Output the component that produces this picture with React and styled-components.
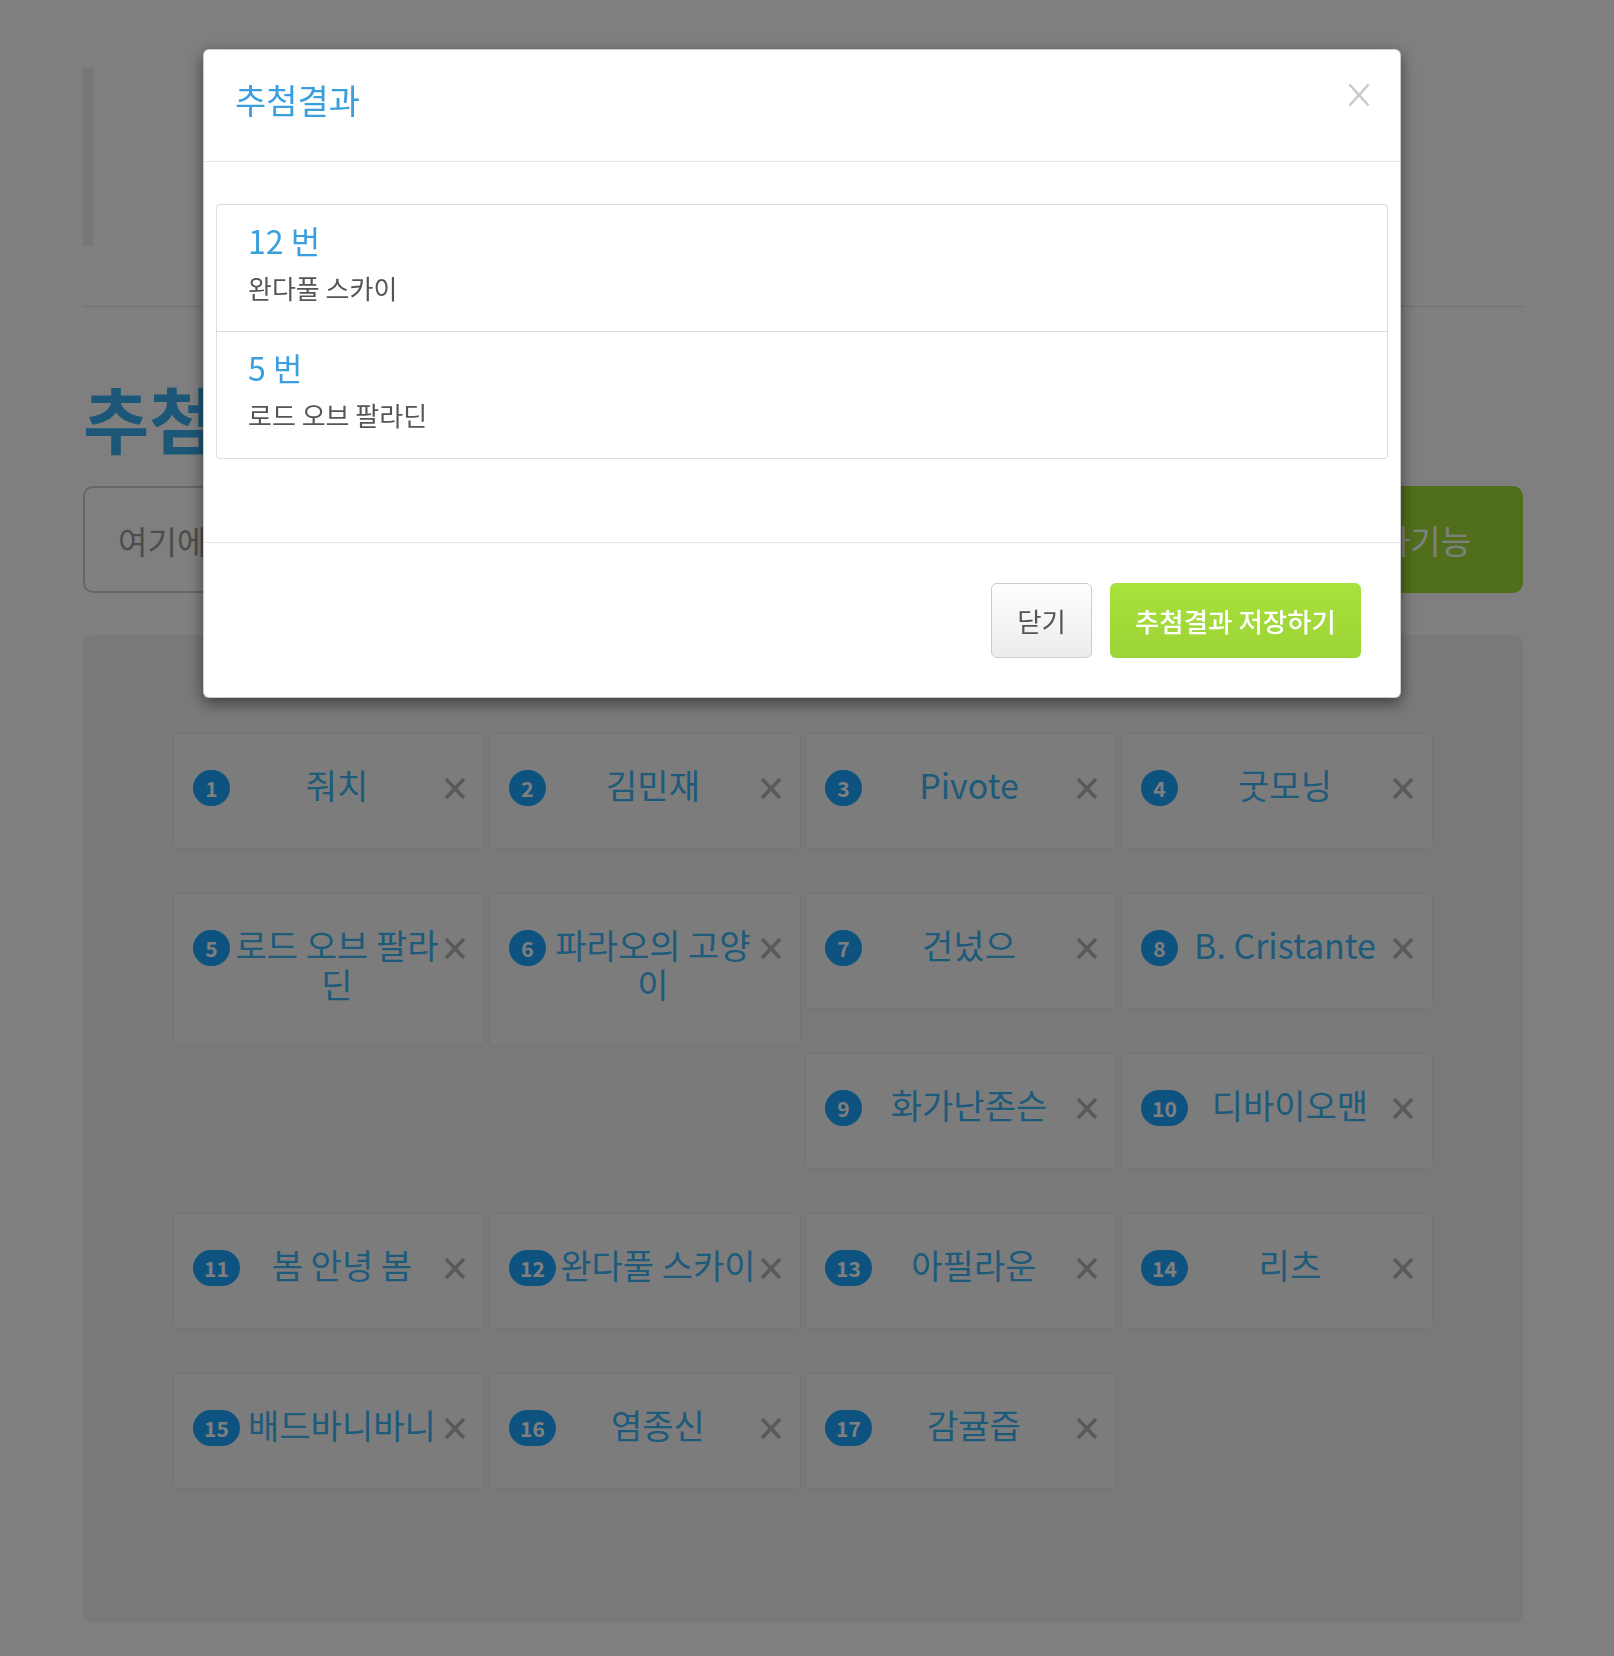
import React from "react";
import styled, { createGlobalStyle } from "styled-components";

const GlobalStyle = createGlobalStyle`
  html, body { margin: 0; padding: 0; background: #fff; }
  body { font-family: "Noto Sans CJK KR", "Noto Sans", sans-serif; }
  *, *::before, *::after { box-sizing: border-box; }
`;

const FONT = `"Noto Sans CJK KR", "Noto Sans", sans-serif`;

/* ---------- page under the backdrop ---------- */
const Page = styled.div`
  width: 1440px;
  margin-left: 83px;
  padding-top: 68px;
`;

const Quote = styled.blockquote`
  margin: 0;
  height: 178px;
  border-left: 10px solid #eee;
`;

const Rule = styled.hr`
  margin: 60px 0 0;
  border: 0;
  border-top: 1px solid #e0e0e0;
`;

const Heading = styled.h1`
  margin: 70px 0 0;
  font-family: ${FONT};
  font-size: 72px;
  line-height: 79px;
  font-weight: 700;
  color: #3aaeee;
`;

const InputRow = styled.div`
  margin-top: 30px;
  display: flex;
  height: 107px;
`;

const NameInput = styled.input`
  flex: 1;
  height: 107px;
  border: 2px solid #ccc;
  border-right: 0;
  border-radius: 10px 0 0 10px;
  padding: 0 33px;
  font-family: ${FONT};
  font-size: 32px;
  color: #333;
  background: #fff;
  &::placeholder { color: #999; }
`;

const AddButton = styled.button`
  border: 0;
  border-radius: 0 10px 10px 0;
  background: #a2dd3a;
  color: #fff;
  font-family: ${FONT};
  font-size: 33px;
  padding: 0 52px;
`;

const Panel = styled.div`
  margin-top: 42px;
  height: 988px;
  background: #f2f2f2;
  border-radius: 10px;
  padding: 99px 0 0 91px;
`;

const Grid = styled.div`
  display: grid;
  grid-template-columns: repeat(4, 310px);
  column-gap: 6px;
  row-gap: 46px;
  align-items: start;
`;

const Card = styled.div`
  grid-row: ${(p) => (p.$tall ? "span 2" : "auto")};
  display: flex;
  align-items: flex-start;
  background: #f9f9f9;
  border-radius: 4px;
  box-shadow: 0 0 3px rgba(0, 0, 0, 0.08);
  padding: 31px 18px 42px 19px;
`;

const Badge = styled.span`
  flex-shrink: 0;
  margin-top: 5px;
  height: 36px;
  min-width: 37px;
  padding: 0 11px;
  border-radius: 18px;
  background: #1ca6ff;
  color: #fff;
  font-family: ${FONT};
  font-size: 21px;
  font-weight: 700;
  display: flex;
  align-items: center;
  justify-content: center;
`;

const Name = styled.div`
  flex: 1;
  min-width: 0;
  text-align: center;
  font-family: ${FONT};
  font-size: 34px;
  line-height: 39px;
  color: #3cb4f4;
`;

const RemoveIcon = styled.svg`
  flex-shrink: 0;
  margin-top: 12px;
  width: 22px;
  height: 23px;
`;

/* ---------- modal ---------- */
const Backdrop = styled.div`
  position: fixed;
  inset: 0;
  background: rgba(0, 0, 0, 0.5);
`;

const Dialog = styled.div`
  position: fixed;
  top: 49px;
  left: 203px;
  width: 1198px;
  background: #fff;
  border: 1px solid rgba(0, 0, 0, 0.2);
  border-radius: 6px;
  box-shadow: 0 5px 15px rgba(0, 0, 0, 0.5);
  font-family: ${FONT};
`;

const Header = styled.div`
  position: relative;
  padding: 31px 31px 43px;
  border-bottom: 1px solid #e5e5e5;
`;

const Title = styled.h4`
  margin: 0;
  font-size: 34px;
  line-height: 37px;
  font-weight: 400;
  color: #3a9fdf;
`;

const CloseIcon = styled.svg`
  position: absolute;
  top: 33px;
  right: 30px;
  width: 22px;
  height: 24px;
`;

const Body = styled.div`
  padding: 42px 12px 83px;
`;

const ResultList = styled.div`
  border: 1px solid #ddd;
  border-radius: 4px;
`;

const ResultItem = styled.div`
  padding: 12px 31px 24px;
  & + & { border-top: 1px solid #ddd; }
`;

const ResultNo = styled.div`
  font-size: 32px;
  line-height: 46px;
  color: #3a9fdf;
`;

const ResultName = styled.div`
  margin-top: 6px;
  font-size: 26px;
  line-height: 38px;
  color: #555;
`;

const Footer = styled.div`
  display: flex;
  justify-content: flex-end;
  gap: 18px;
  padding: 40px 39px 39px;
  border-top: 1px solid #e5e5e5;
`;

const CancelButton = styled.button`
  height: 75px;
  padding: 0 25px;
  border: 1px solid #ccc;
  border-radius: 6px;
  background: linear-gradient(#ffffff, #ececec);
  color: #555;
  font-family: ${FONT};
  font-size: 26.5px;
`;

const SaveButton = styled.button`
  height: 75px;
  padding: 0 25px;
  border: 0;
  border-radius: 6px;
  background: linear-gradient(#a8e23c, #9cd336);
  color: #fff;
  font-family: ${FONT};
  font-size: 26.5px;
  font-weight: 500;
`;

const entries = [
  { name: "줘치" },
  { name: "김민재" },
  { name: "Pivote" },
  { name: "굿모닝" },
  { name: "로드 오브 팔라딘", tall: true },
  { name: "파라오의 고양이", tall: true },
  { name: "건넜으" },
  { name: "B. Cristante" },
  { name: "화가난존슨" },
  { name: "디바이오맨" },
  { name: "봄 안녕 봄" },
  { name: "완다풀 스카이" },
  { name: "아필라운" },
  { name: "리츠" },
  { name: "배드바니바니" },
  { name: "염종신" },
  { name: "감귤즙" },
];

const results = [
  { no: 12, name: "완다풀 스카이" },
  { no: 5, name: "로드 오브 팔라딘" },
];

function Cross() {
  return (
    <RemoveIcon viewBox="0 0 22 23">
      <path d="M2 2 L20 21 M20 2 L2 21" stroke="#b4b4b4" strokeWidth="3.6" fill="none" />
    </RemoveIcon>
  );
}

export default function App() {
  return (
    <>
      <GlobalStyle />
      <Page>
        <Quote />
        <Rule />
        <Heading>추첨</Heading>
        <InputRow>
          <NameInput placeholder="여기에 참가자 이름을 입력하세요" />
          <AddButton>추가기능</AddButton>
        </InputRow>
        <Panel>
          <Grid>
            {entries.map((e, i) => (
              <Card key={i} $tall={e.tall}>
                <Badge>{i + 1}</Badge>
                <Name>{e.name}</Name>
                <Cross />
              </Card>
            ))}
          </Grid>
        </Panel>
      </Page>

      <Backdrop />
      <Dialog>
        <Header>
          <Title>추첨결과</Title>
          <CloseIcon viewBox="0 0 22 24">
            <path d="M1.5 1.5 L20.5 22.5 M20.5 1.5 L1.5 22.5" stroke="#c8c8c8" strokeWidth="2.4" fill="none" />
          </CloseIcon>
        </Header>
        <Body>
          <ResultList>
            {results.map((r) => (
              <ResultItem key={r.no}>
                <ResultNo>{r.no} 번</ResultNo>
                <ResultName>{r.name}</ResultName>
              </ResultItem>
            ))}
          </ResultList>
        </Body>
        <Footer>
          <CancelButton>닫기</CancelButton>
          <SaveButton>추첨결과 저장하기</SaveButton>
        </Footer>
      </Dialog>
    </>
  );
}
